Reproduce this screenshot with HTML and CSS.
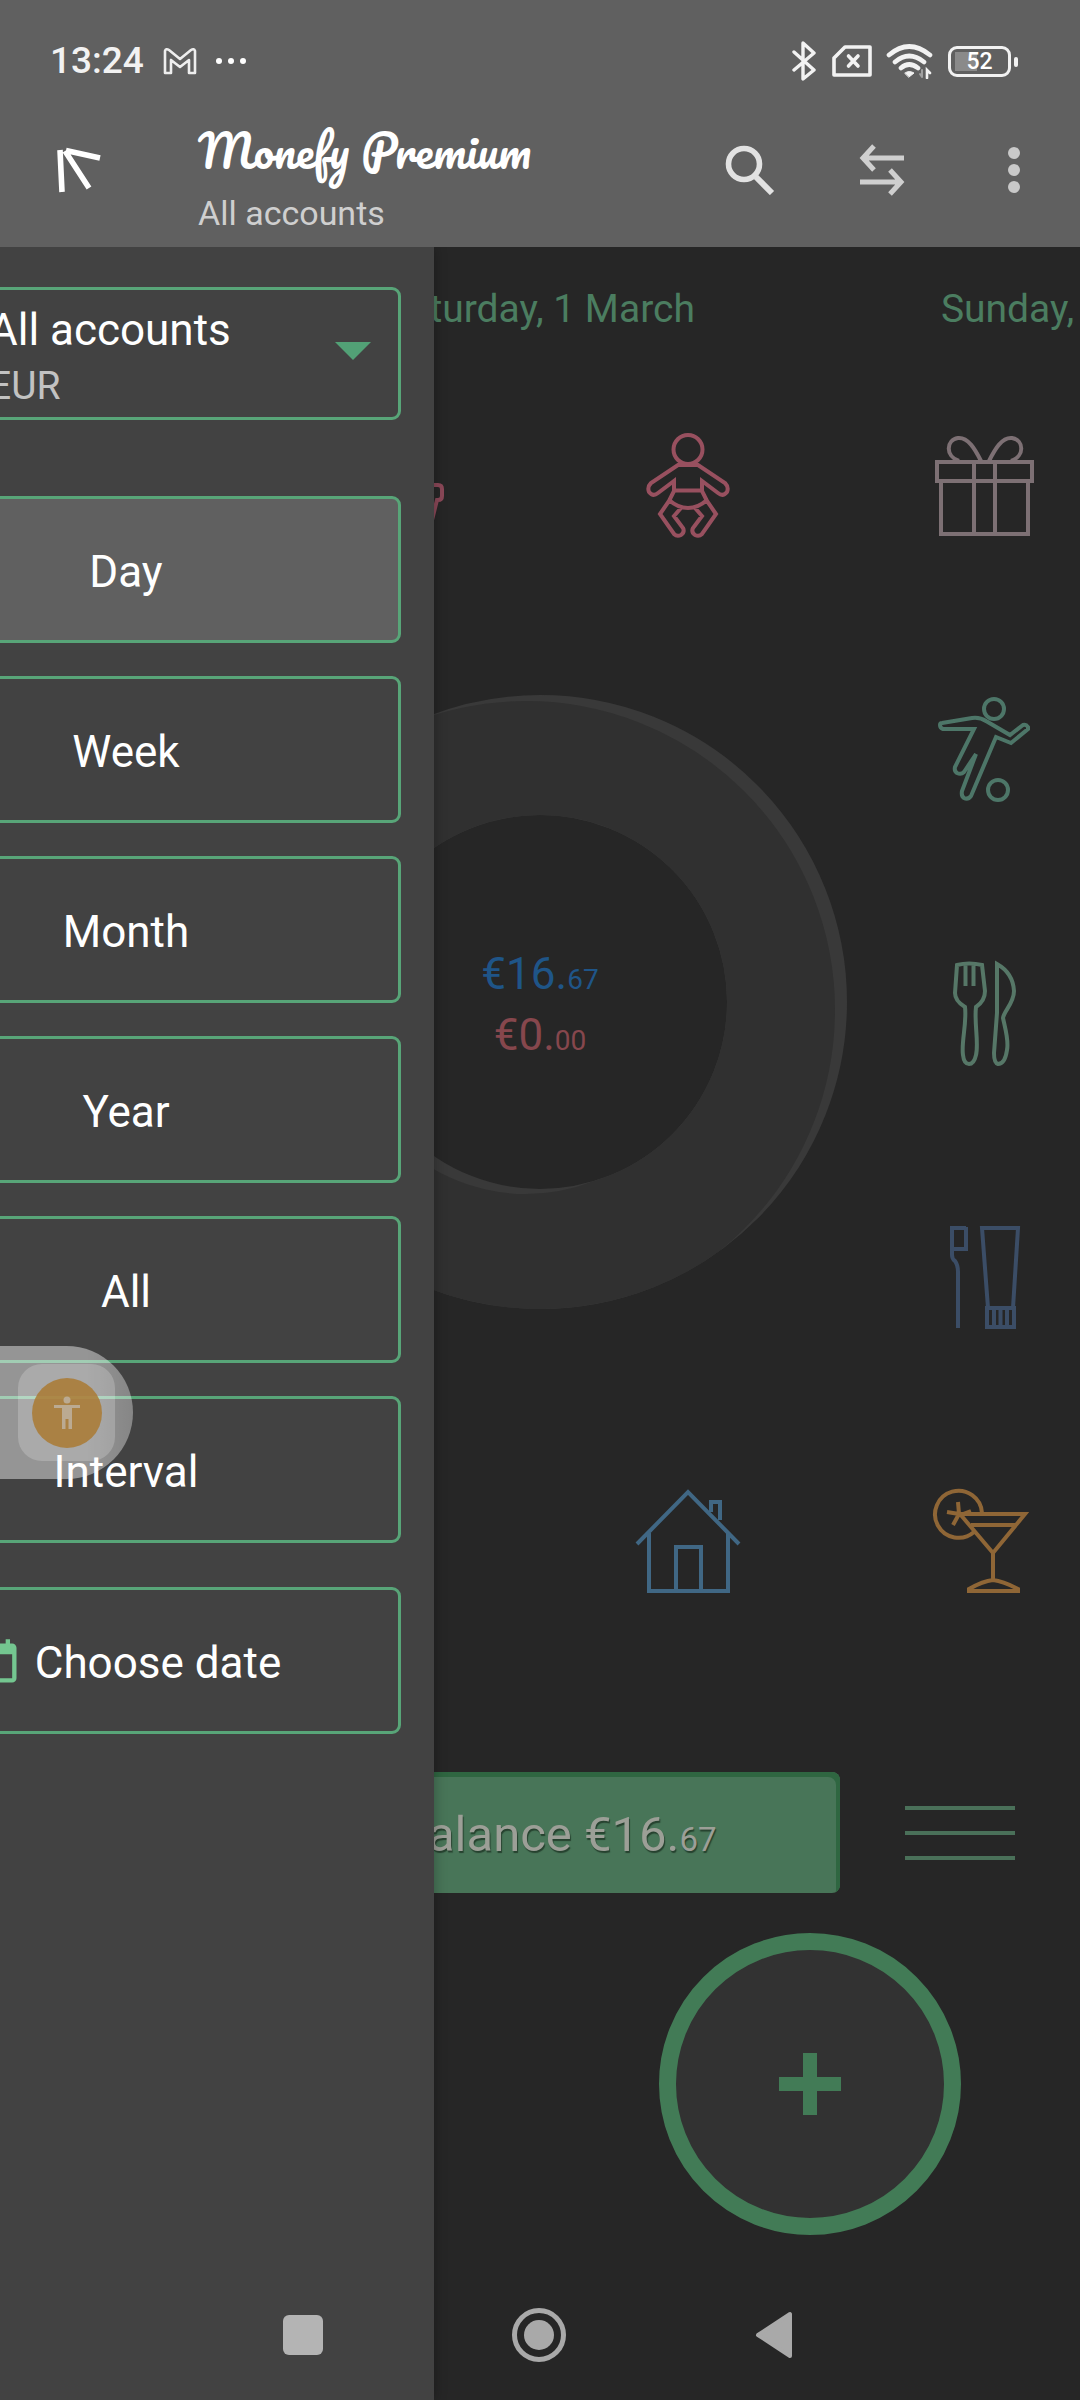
FILE: index.html
```html
<!DOCTYPE html>
<html lang="en">
<head>
<meta charset="utf-8">
<meta name="viewport" content="width=device-width, initial-scale=1">
<title>Monefy Premium</title>
<link rel="stylesheet" href="styles.css">
</head>
<body>
<div class="app">
  <header class="header">
    <div class="status">
      <div class="status-left">
        <time class="clock">13:24</time>
        <svg class="gmail" viewBox="0 0 34 28" fill="none" stroke="#eee" stroke-width="2.6" stroke-linejoin="round"><path d="M2 26V4Q3 1 6 3L17 12L28 3Q31 1 32 4V26H26V13L17 20L8 13V26Z"/></svg>
        <svg class="more-dots" viewBox="0 0 32 8" fill="#fff"><circle cx="4" cy="4" r="3"/><circle cx="16" cy="4" r="3"/><circle cx="28" cy="4" r="3"/></svg>
      </div>
      <div class="status-right">
        <svg class="bluetooth" viewBox="0 0 24 40" fill="none" stroke="#f2f2f2" stroke-width="3.4" stroke-linejoin="round" stroke-linecap="round"><path d="M2 11L22 29L11 38V2L22 12L2 29"/></svg>
        <svg class="sim" viewBox="0 0 40 32" fill="none" stroke="#f2f2f2" stroke-width="3.6" stroke-linejoin="round" stroke-linecap="round"><path d="M13 2H38V30H2V13Z"/><path d="M16.500 11L26 21M26 11L16.500 21"/></svg>
        <svg class="wifi" viewBox="0 0 48 36" fill="none" stroke="#f2f2f2" stroke-width="4.600" stroke-linecap="round"><path d="M3 12Q23 -5 44 12M9 19Q23 7 38 19M15 25Q23 18 32 25"/><path d="M19 30Q23 27 28 30L23 34Z" fill="#f2f2f2" stroke-width="1"/><path d="M36 27V34M34 31L36 34" stroke="#a0a0a0" stroke-width="2"/><path d="M41 35V27L44 30" stroke-width="2.600"/></svg>
        <div class="battery"><span class="battery-level">52</span></div>
      </div>
    </div>
    <div class="toolbar">
      <button class="tool-btn nav-toggle" aria-label="Close navigation">
        <svg width="46" height="46" viewBox="0 0 46 46" fill="none" stroke="#fff" stroke-width="5.600"><path d="M5 3L7 45M10 4L34 41M11 3.500L45 11"/></svg>
      </button>
      <div class="titles">
        <h1 class="title">Monefy Premium</h1>
        <p class="subtitle">All accounts</p>
      </div>
      <button class="tool-btn" aria-label="Search">
        <svg width="50" height="50" viewBox="0 0 50 50" fill="none" stroke="#e2e2e2"><circle cx="19" cy="19" r="15.500" stroke-width="5.600"/><path d="M31 32L47 48" stroke-width="6"/></svg>
      </button>
      <button class="tool-btn" aria-label="Transfer">
        <svg width="46" height="52" viewBox="0 0 46 52" fill="none" stroke="#cfcfcf" stroke-width="5"><path d="M45 14H4M15 2L4 14L15 26"/><path d="M1 38H42M31 26L42 38L31 50"/></svg>
      </button>
      <button class="tool-btn" aria-label="More options">
        <svg width="12" height="48" viewBox="0 0 12 48" fill="#c9c9c9"><circle cx="6" cy="7" r="6"/><circle cx="6" cy="24" r="6"/><circle cx="6" cy="41" r="6"/></svg>
      </button>
    </div>
  </header>

  <div class="stage">
    <main class="content">
      <div class="dates">
        <span class="date-current">Saturday, 1 March</span>
        <span class="date-next">Sunday,</span>
      </div>

      <section class="categories">
        <button class="category c2 r1 car" aria-label="Car"><svg viewBox="0 0 110 110"><path d="M60 55H101Q105 55 105 59V66Q105 70 101 70H100L95 90"/></svg></button>
        <button class="category c3 r1 baby" aria-label="Baby"><svg viewBox="0 0 110 110"><circle cx="55" cy="19.500" r="14.500"/><path d="M45 35H65L92 53Q96 57 94 62Q90 67 85 63L69 51V60.500H41V51L25 63Q20 67 16 62Q14 57 18 53ZM41 61L36 71L27 84L41 104Q44 107 48 105Q52 102 50 98L41 86L48 78M69 61L74 71L83 84L69 104Q66 107 62 105Q58 102 60 98L69 86L62 78M36 70Q45 78 55 78Q65 78 74 70"/></svg></button>
        <button class="category c4 r1 gift" aria-label="Gifts"><svg viewBox="0 0 110 110"><path d="M8 32H103V51H8ZM12 51V104H99V51M45 32V104M66 32V104M52 31C46 19 39 7 29 8C17 10 16 26 30 31M60 31C66 19 73 7 83 8C95 10 96 26 82 31"/></svg></button>
        <button class="category c4 r2 sports" aria-label="Sports"><svg viewBox="0 0 110 110"><circle cx="65" cy="15" r="10"/><circle cx="69" cy="96" r="10"/><path d="M13 29L43 24Q51 23 57 27L81 41L94 31Q97 30 99 33V35L82 49L67 43L42 102Q39 106 35 104Q32 102 33 97L47 60L35 78Q32 81 28 79Q25 77 26 73L45 35H14Q11 34 11 31Q11 29 13 29Z"/></svg></button>
        <button class="category c4 r3 food" aria-label="Eating out"><svg viewBox="0 0 110 110"><path d="M28 7Q40 4 53 7L56 33Q56 43 47 49C45 65 50 85 47 97Q45 106 40 106Q35 106 34 97C32 85 38 65 36 49Q26 43 26 35ZM36.500 7V28M44.500 7V28M68 6Q84 15 85 33C85 45 75 53 74 60C76 70 80 82 78 92Q76 106 69 106Q65 105 65 95L68 55Z"/></svg></button>
        <button class="category c4 r4 toiletry" aria-label="Toiletry"><svg viewBox="0 0 110 110"><path d="M37 6H23V33Q23 37 26 39Q29 43 29 50V106M37 5V27H25M53 6H89L84 86H59ZM58 86H85V105H58ZM65 88V104M71.500 88V104M78 88V104"/></svg></button>
        <button class="category c3 r5 house" aria-label="House"><svg viewBox="0 0 110 110"><path d="M4 58L55 6L106 58M16 47V105H95V47M43 105V61H68V105M78 26V16H87V34"/></svg></button>
        <button class="category c4 r5 drinks" aria-label="Entertainment"><svg viewBox="0 0 110 110"><path d="M53 27A23.500 23.500 0 1 0 45 46M31 28H96L64 67ZM42 39H87M64 67V94M64 94Q54 95 40 103V105H89V103Q74 95 64 94M30 28L29 16M30 28L18 26M30 28L24 39M34 28L42 25"/></svg></button>

        <div class="donut">
          <svg class="donut-ring" viewBox="0 0 614 614" aria-hidden="true">
            <defs>
              <clipPath id="ring"><path clip-rule="evenodd" d="M307 0A307 307 0 1 1 307 614A307 307 0 1 1 307 0ZM307 120A187 187 0 1 0 307 494A187 187 0 1 0 307 120Z"/></clipPath>
            </defs>
            <circle cx="307" cy="307" r="247" fill="none" stroke="#393939" stroke-width="120"/>
            <g clip-path="url(#ring)"><circle cx="293" cy="315" r="246.500" fill="none" stroke="#303030" stroke-width="125"/></g>
          </svg>
          <p class="income">€16.<small>67</small></p>
          <p class="expense">€0.<small>00</small></p>
        </div>
      </section>

      <div class="balance-row">
        <button class="balance"><span>Balance €16.<small>67</small></span></button>
        <button class="list-btn" aria-label="Show records"><span></span><span></span><span></span></button>
      </div>

      <div class="fab-row">
        <button class="fab" aria-label="Add income"><svg width="62" height="62" viewBox="0 0 62 62" stroke="#427b56" stroke-width="14"><path d="M31 0V62M0 31H62"/></svg></button>
      </div>
    </main>

    <aside class="drawer">
      <label class="account">
        <select class="account-name" aria-label="Account"><option>All accounts</option></select>
        <span class="account-currency">EUR</span>
        <svg class="caret" width="36" height="18" viewBox="0 0 36 18" fill="#52a176"><path d="M0 0H36L18 18Z"/></svg>
      </label>
      <div class="periods">
        <button class="period selected">Day</button>
        <button class="period">Week</button>
        <button class="period">Month</button>
        <button class="period">Year</button>
        <button class="period">All</button>
        <button class="period">Interval</button>
      </div>
      <button class="period choose-date">
        <svg width="52" height="52" viewBox="0 0 24 24" fill="#74c690"><path d="M19 3h-1V1h-2v2H8V1H6v2H5c-1.110 0-2 .9-2 2v14c0 1.100.89 2 2 2h14c1.100 0 2-.9 2-2V5c0-1.100-.9-2-2-2zm0 16H5V8h14v11z"/></svg>
        Choose date
      </button>
    </aside>

    <button class="assist" aria-label="Accessibility">
      <span class="assist-tile"><span class="assist-dot">
        <svg width="26" height="34" viewBox="0 0 26 34" fill="#bbaa92"><circle cx="13" cy="4" r="3.500"/><path d="M0 9H26V12H18V33H14.500V23H11.500V33H8V12H0Z"/></svg>
      </span></span>
    </button>

    <nav class="system-nav" aria-label="System">
      <button class="sys-btn" aria-label="Recent apps"><svg width="56" height="56" viewBox="0 0 56 56"><rect x="8" y="8" width="40" height="40" rx="6" fill="#b4b4b4"/></svg></button>
      <button class="sys-btn" aria-label="Home"><svg width="56" height="56" viewBox="0 0 56 56"><circle cx="28" cy="28" r="24.500" fill="none" stroke="#a9a9a9" stroke-width="5"/><circle cx="28" cy="28" r="15" fill="#a9a9a9"/></svg></button>
      <button class="sys-btn" aria-label="Back"><svg width="56" height="56" viewBox="0 0 56 56"><path d="M11 28L43 7V49Z" fill="#a9a9a9" stroke="#a9a9a9" stroke-width="4" stroke-linejoin="round"/></svg></button>
    </nav>
  </div>
</div>
</body>
</html>
```
FILE: styles.css
```css
* { box-sizing: border-box; }

body {
  margin: 0;
  background: #262626;
  color: #fff;
  font-family: Roboto, "Liberation Sans", sans-serif;
}

button, select {
  margin: 0;
  padding: 0;
  border: 0;
  background: none;
  color: inherit;
  font: inherit;
}

svg { display: block; flex: none; }
p, h1 { margin: 0; font-weight: 400; }

.app {
  display: flex;
  flex-direction: column;
  min-height: 100vh;
}

/* Header */
.header {
  background: #606060;
  position: relative;
  z-index: 3;
}

.status {
  display: flex;
  justify-content: space-between;
  height: 93px;
  padding: 29px 69px 0 50px;
}

.status-left, .status-right {
  display: flex;
  align-items: center;
  height: 64px;
}

.clock {
  font-size: 37px;
  font-weight: 500;
  line-height: 64px;
  color: #f2f2f2;
}

.gmail { width: 34px; height: 28px; margin-left: 19px; }
.more-dots { width: 32px; height: 8px; margin-left: 18px; }
.bluetooth { width: 24px; height: 40px; }
.sim { width: 40px; height: 32px; margin-left: 16px; }
.wifi { width: 48px; height: 36px; margin: 0 14px; }

.battery {
  position: relative;
  width: 63px;
  height: 31px;
  border: 3px solid #f2f2f2;
  border-radius: 9px;
  background: linear-gradient(#8a8a8a, #8a8a8a) 4px center / 22px 19px no-repeat;
}

.battery::after {
  content: "";
  position: absolute;
  right: -10px;
  top: 8px;
  width: 4px;
  height: 10px;
  border-radius: 2px;
  background: #f2f2f2;
}

.battery-level {
  display: block;
  font-size: 23px;
  font-weight: 500;
  line-height: 26px;
  text-align: center;
}

.toolbar {
  display: flex;
  height: 154px;
}

.tool-btn {
  display: flex;
  align-items: center;
  justify-content: center;
  width: 132px;
}

.nav-toggle { width: 156px; margin-right: 42px; }
.titles { flex: 1; padding-top: 27px; }

.title {
  font-family: Pacifico, "Liberation Serif", cursive;
  font-size: 45px;
  line-height: 60px;
  white-space: nowrap;
}

.subtitle {
  font-size: 34px;
  line-height: 40px;
  padding-top: 13px;
  color: #cfcfcf;
}

/* Main screen */
.stage {
  position: relative;
  display: flex;
  flex: 1;
  flex-direction: column;
  overflow: hidden;
}

.content {
  display: flex;
  flex: 1;
  flex-direction: column;
}

.dates {
  display: grid;
  grid-template-columns: minmax(0, 1fr) auto minmax(0, 1fr);
  padding-top: 39px;
  color: #4b7d60;
  font-size: 39px;
  line-height: 46px;
  white-space: nowrap;
}

.date-current { grid-column: 2; }
.date-next { grid-column: 3; padding-left: 246px; overflow: hidden; }

.categories {
  display: grid;
  grid-template-columns: repeat(4, 110px);
  grid-template-rows: repeat(5, 110px);
  justify-content: space-between;
  row-gap: 154px;
  margin-top: 98px;
  padding: 0 41px;
}

.category svg {
  width: 110px;
  height: 110px;
  fill: none;
  stroke: currentColor;
  stroke-width: 4;
}

.c2 { grid-column: 2; }
.c3 { grid-column: 3; }
.c4 { grid-column: 4; }
.r1 { grid-row: 1; }
.r2 { grid-row: 2; }
.r3 { grid-row: 3; }
.r4 { grid-row: 4; }
.r5 { grid-row: 5; }

.car { color: #8a4858; }
.baby { color: #98505f; }
.gift { color: #7d7074; }
.sports { color: #4d7668; }
.food { color: #567767; }
.toiletry { color: #3b4d66; }
.house { color: #406784; }
.drinks { color: #8f6636; }

.donut {
  display: grid;
  grid-column: 1 / -1;
  grid-row: 2 / 5;
  grid-template-columns: 614px;
  grid-template-rows: 249px 61px 60px;
  align-self: start;
  justify-self: center;
  height: 614px;
  margin-top: 1px;
  text-align: center;
  font-size: 44px;
  line-height: 60px;
  pointer-events: none;
}

.donut p { grid-column: 1; z-index: 1; }
.donut small { font-size: 28px; }
.donut-ring { grid-area: 1 / 1 / 4 / 2; width: 614px; height: 614px; }
.income { grid-row: 2; color: #1f5588; }
.expense { grid-row: 3; color: #86474d; }

.balance-row {
  display: grid;
  grid-template-columns: 2fr 5fr 2fr;
  align-items: center;
  margin-top: 176px;
}

.balance {
  grid-column: 2;
  height: 121px;
  padding: 9px 0 0 34px;
  border-radius: 8px;
  background: #487558;
  box-shadow: inset -4px 5px 0 #2f6641;
  color: #9c9f97;
  font-size: 49px;
  line-height: 60px;
  text-shadow: 1px 2px 1px #26422f;
}

.balance small { font-size: 33px; }

.list-btn {
  display: grid;
  gap: 21px;
  width: 110px;
  justify-self: center;
}

.list-btn span { height: 4px; background: #4a7059; }

.fab-row {
  display: grid;
  grid-template-columns: 1fr 1fr;
  justify-items: center;
  margin: 40px 0 34px;
}

.fab {
  grid-column: 2;
  display: flex;
  align-items: center;
  justify-content: center;
  width: 302px;
  height: 302px;
  border: 17px solid #427b56;
  border-radius: 50%;
  background: #323232;
}

/* Drawer, part way through its slide */
.drawer {
  position: absolute;
  top: 0;
  bottom: 0;
  left: -182px;
  width: 616px;
  padding: 40px 33px 0;
  background: #424242;
  box-shadow: 0 0 12px rgba(0, 0, 0, .3);
}

.account {
  display: grid;
  grid-template-columns: 1fr 36px;
  grid-template-rows: 56px 56px;
  align-items: center;
  height: 133px;
  padding: 12px 27px 0 135px;
  border: 3px solid #58a578;
  border-radius: 9px;
}

.account-name {
  appearance: none;
  height: 56px;
  font-size: 44px;
  line-height: 56px;
}

.account-currency {
  grid-row: 2;
  font-size: 39px;
  line-height: 56px;
  color: #c2c2c2;
}

.caret { grid-area: 1 / 2 / 3 / 3; margin-bottom: 14px; }

.periods {
  display: grid;
  gap: 33px;
  margin: 76px 0 44px;
}

.period {
  display: flex;
  align-items: center;
  justify-content: center;
  gap: 12px;
  width: 100%;
  height: 147px;
  padding-top: 4px;
  border: 3px solid #58a578;
  border-radius: 9px;
  font-size: 44px;
  line-height: 52px;
}

.selected { background: #606060; }

/* Floating accessibility shortcut */
.assist {
  position: absolute;
  top: 1099px;
  left: 0;
  width: 133px;
  height: 133px;
  padding: 18px;
  border-radius: 0 67px 67px 0;
  background: linear-gradient(90deg, rgba(255, 255, 255, .44) 65%, rgba(255, 255, 255, .36));
}

.assist-tile {
  display: flex;
  align-items: center;
  justify-content: center;
  width: 97px;
  height: 97px;
  border-radius: 24px;
  background: rgba(255, 255, 255, .2);
}

.assist-dot {
  display: flex;
  align-items: center;
  justify-content: center;
  width: 70px;
  height: 70px;
  border-radius: 50%;
  background: rgba(170, 122, 50, .85);
}

/* System navigation */
.system-nav {
  position: relative;
  display: flex;
  justify-content: center;
  height: 130px;
  padding-right: 2px;
}

.sys-btn {
  display: flex;
  align-items: center;
  justify-content: center;
  width: 236px;
}
```
